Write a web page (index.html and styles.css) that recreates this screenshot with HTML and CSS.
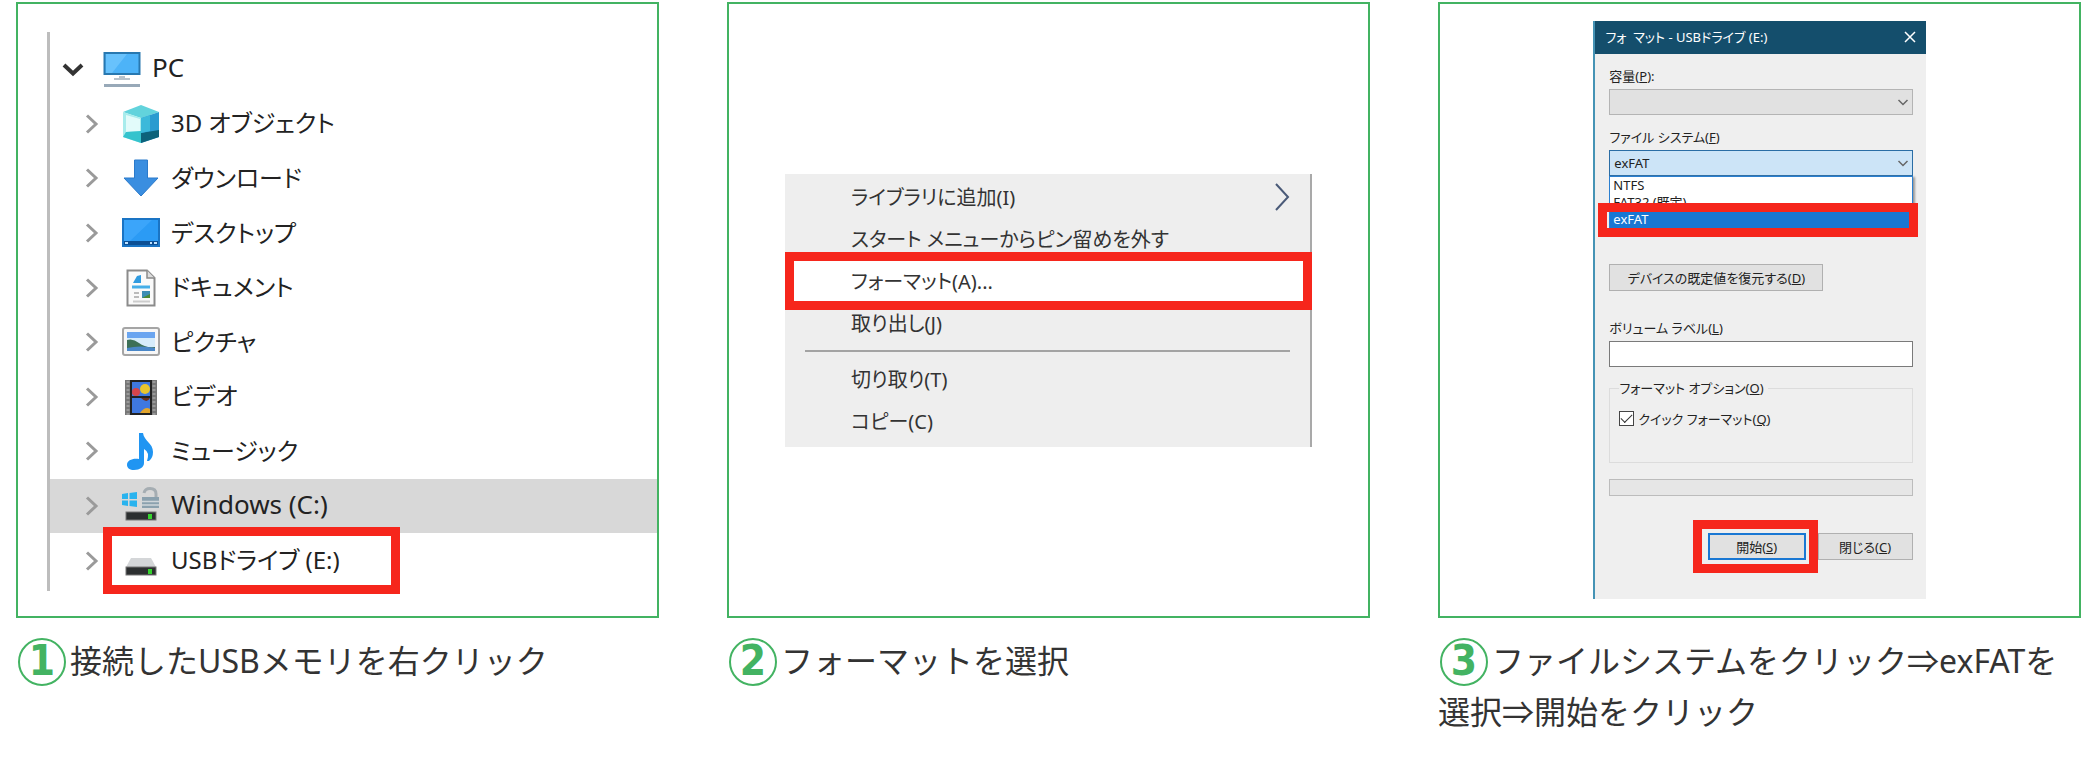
FILE: index.html
```html
<!DOCTYPE html>
<html lang="ja">
<head>
    <meta charset="UTF-8">
    <meta name="viewport" content="width=device-width, initial-scale=1.0">
    <title>USBメモリのフォーマット手順</title>
    <link rel="stylesheet" href="styles.css">
</head>
<body>
    <!-- shared chevrons -->
    <svg class="sprite" aria-hidden="true">
        <symbol id="chevron" viewBox="0 0 24 24">
            <path d="M7 3.500 L16 12 L7 20.500" fill="none" stroke="currentColor" stroke-width="3"/>
        </symbol>
        <symbol id="arrow-down" viewBox="0 0 12 12">
            <path d="M1.500 4 L6 8.500 L10.500 4" fill="none" stroke="currentColor" stroke-width="1.500"/>
        </symbol>
    </svg>

    <div class="steps">
        <section class="step">
            <div class="step-image">
                <ul class="tree">
                    <li class="tree-item tree-root">
                        <svg class="chevron" viewBox="0 0 24 24"><path d="M3 8 L12 16.500 L21 8" fill="none" stroke="#333" stroke-width="4"/></svg>
                        <svg class="tree-icon" viewBox="0 0 38 38">
                            <rect x="1.500" y="3" width="35" height="21" fill="#4db3f8" stroke="#2878b0" stroke-width="2"/>
                            <path d="M3 4 H24 L9 23 H3 Z" fill="#7ccbff" opacity=".6"/>
                            <path d="M16 26 h6 v2 h5 v2 h-16 v-2 h5 z" fill="#b9c3cc"/>
                            <rect x="1" y="34" width="36" height="3" fill="#98a9b8"/>
                        </svg>
                        <span>PC</span>
                    </li>
                    <li class="tree-item">
                        <svg class="chevron"><use href="#chevron"/></svg>
                        <svg class="tree-icon" viewBox="0 0 38 38">
                            <path d="M19 0 L37 7 L19 13 L1 7 Z" fill="#62d3dc"/>
                            <path d="M1 7 L19 13 V38 L1 32 Z" fill="#a8ecec"/>
                            <path d="M4 10 L18 14 V26 L4 27 Z" fill="#e2fbfa"/>
                            <path d="M1 32 L4 27 L19 26 V38 Z" fill="#35c3cd"/>
                            <path d="M19 13 L37 7 V32 L19 38 Z" fill="#2b9bd0"/>
                            <path d="M19 38 V28 L37 25 V32 Z" fill="#0d627a"/>
                            <path d="M19 13 L28 10 V26 L19 28 Z" fill="#3cb9da"/>
                        </svg>
                        <span>3D オブジェクト</span>
                    </li>
                    <li class="tree-item">
                        <svg class="chevron"><use href="#chevron"/></svg>
                        <svg class="tree-icon" viewBox="0 0 38 38">
                            <path d="M12.500 1 H25.500 V19 H36 L19 37 L2 19 H12.500 Z" fill="#3a8ee0" stroke="#2b7acb"/>
                        </svg>
                        <span>ダウンロード</span>
                    </li>
                    <li class="tree-item">
                        <svg class="chevron"><use href="#chevron"/></svg>
                        <svg class="tree-icon" viewBox="0 0 38 38">
                            <rect x="1" y="5" width="36" height="27" fill="#2b9bf5" stroke="#1a74c4" stroke-width="2"/>
                            <path d="M2 6 H30 L8 27 H2 Z" fill="#4cb0ff" opacity=".5"/>
                            <rect x="2" y="27" width="34" height="4" fill="#0c4f94"/>
                            <path d="M3 29 h3 M28 29 h2 M32 29 h3" stroke="#bfe2ff" stroke-width="2"/>
                        </svg>
                        <span>デスクトップ</span>
                    </li>
                    <li class="tree-item">
                        <svg class="chevron"><use href="#chevron"/></svg>
                        <svg class="tree-icon" viewBox="0 0 38 38">
                            <path d="M5.500 1.500 H25 L32.500 9 V36.500 H5.500 Z" fill="#fafafa" stroke="#8b8b8b" stroke-width="2"/>
                            <path d="M25 1.500 V9 H32.500" fill="#ddd" stroke="#8b8b8b" stroke-width="1.500"/>
                            <path d="M11 14 L15 7 L19 6 V14 Z" fill="#2f9be0"/>
                            <path d="M10 18 H28" stroke="#45aee8" stroke-width="3"/>
                            <path d="M12 24 h5 M12 28 h5" stroke="#bbb" stroke-width="2"/>
                            <rect x="20" y="22" width="8" height="7" fill="#3d8fb5"/>
                            <path d="M20 29 L28 25 V29 Z" fill="#4d8b34"/>
                            <path d="M11 32.500 H28" stroke="#ccc" stroke-width="2"/>
                        </svg>
                        <span>ドキュメント</span>
                    </li>
                    <li class="tree-item">
                        <svg class="chevron"><use href="#chevron"/></svg>
                        <svg class="tree-icon" viewBox="0 0 38 38">
                            <rect x="1" y="5" width="36" height="27" rx="2" fill="#f7f7f7" stroke="#a5a5a5" stroke-width="2"/>
                            <rect x="5" y="9" width="28" height="19" fill="#d6ecfb"/>
                            <rect x="5" y="9" width="28" height="6" fill="#6aa5f0"/>
                            <path d="M5 17 Q11 15 17 20 T33 24 V25 H5 Z" fill="#3d7057"/>
                            <path d="M5 25 Q18 22 33 25 V28 H5 Z" fill="#4a87c8"/>
                        </svg>
                        <span>ピクチャ</span>
                    </li>
                    <li class="tree-item">
                        <svg class="chevron"><use href="#chevron"/></svg>
                        <svg class="tree-icon" viewBox="0 0 38 38">
                            <rect x="3" y="2" width="32" height="35" fill="#777"/>
                            <path d="M6 3 V37 M32 3 V37" stroke="#999" stroke-width="3" stroke-dasharray="2 2"/>
                            <rect x="8" y="2" width="22" height="35" fill="#222"/>
                            <rect x="10" y="4" width="18" height="14" fill="#3f78e0"/>
                            <rect x="10" y="20" width="18" height="15" fill="#3f78e0"/>
                            <circle cx="23" cy="11" r="5" fill="#e8c42e"/>
                            <circle cx="14" cy="14" r="4" fill="#d6454b"/>
                            <path d="M19 20 h9 q-3 6 -9 0z" fill="#6b2e1c"/>
                            <path d="M18 35 q5 -7 10 -4 v4z" fill="#e2a52d"/>
                        </svg>
                        <span>ビデオ</span>
                    </li>
                    <li class="tree-item">
                        <svg class="chevron"><use href="#chevron"/></svg>
                        <svg class="tree-icon" viewBox="0 0 38 38">
                            <path d="M17 1 H21 C22 9 31 11 31 20 Q31 26 27 29 H25 Q28 20 22 17 V31 C22 35 18 38 12 38 C8 38 5 36 5 33 C5 28 11 26 17 27 Z" fill="#2095f2"/>
                        </svg>
                        <span>ミュージック</span>
                    </li>
                    <li class="tree-item selected">
                        <svg class="chevron"><use href="#chevron"/></svg>
                        <svg class="tree-icon" viewBox="0 0 38 38">
                            <path d="M0 7 L6 6 V12 H0 Z M7.500 6 L15 5 V12 H7.500 Z M0 13.500 H6 V19 L0 18 Z M7.500 13.500 H15 V20 L7.500 19 Z" fill="#29b3ee"/>
                            <path d="M22 6 Q23 1.500 28 1.500 Q34 1.500 34 7 V11" fill="none" stroke="#a5adb2" stroke-width="3"/>
                            <path d="M20 10 H37 V21 H20 Z" fill="#8ba1ae"/>
                            <path d="M20 14.500 H37 M20 18 H37" stroke="#cfd6da" stroke-width="1.500"/>
                            <rect x="4" y="25" width="30" height="8" fill="#2c2f30" stroke="#777"/>
                            <rect x="26" y="27" width="4" height="5" fill="#36d32e"/>
                        </svg>
                        <span>Windows (C:)</span>
                    </li>
                    <li class="tree-item marked">
                        <svg class="chevron"><use href="#chevron"/></svg>
                        <svg class="tree-icon" viewBox="0 0 38 38">
                            <path d="M9 16 H29 L34 25 H4 Z" fill="#d4d6d8"/>
                            <rect x="4" y="25" width="30" height="8" fill="#2c2f30" stroke="#777"/>
                            <rect x="26" y="27" width="4" height="5" fill="#36d32e"/>
                        </svg>
                        <span>USBドライブ (E:)</span>
                    </li>
                </ul>
            </div>
            <p class="caption"><span class="number">1</span>接続したUSBメモリを右クリック</p>
        </section>

        <section class="step">
            <div class="step-image center">
                <ul class="context-menu">
                    <li class="menu-item">ライブラリに追加(I)
                        <svg class="submenu-arrow" viewBox="0 0 16 28"><path d="M2 1 L14 14 L2 27" fill="none" stroke="#4a5a78" stroke-width="2"/></svg>
                    </li>
                    <li class="menu-item">スタート メニューからピン留めを外す</li>
                    <li class="menu-item marked">フォーマット(A)...</li>
                    <li class="menu-item">取り出し(J)</li>
                    <li class="separator"></li>
                    <li class="menu-item">切り取り(T)</li>
                    <li class="menu-item">コピー(C)</li>
                </ul>
            </div>
            <p class="caption"><span class="number">2</span>フォーマットを選択</p>
        </section>

        <section class="step">
            <div class="step-image center">
                <form class="dialog">
                    <div class="title-bar">
                        <span>フォ  マット - USBドライブ (E:)</span>
                        <button type="button" class="close" aria-label="閉じる">
                            <svg viewBox="0 0 12 12"><path d="M1 1 L11 11 M11 1 L1 11" stroke="#fff" stroke-width="1.500"/></svg>
                        </button>
                    </div>
                    <div class="dialog-body">
                        <div class="field">
                            <label for="capacity">容量(<u>P</u>):</label>
                            <div class="select-box">
                                <select id="capacity"><option></option></select>
                                <svg class="select-arrow"><use href="#arrow-down"/></svg>
                            </div>
                        </div>
                        <div class="field">
                            <label for="filesystem">ファイル システム(<u>F</u>)</label>
                            <div class="select-box open">
                                <select id="filesystem"><option>exFAT</option></select>
                                <svg class="select-arrow"><use href="#arrow-down"/></svg>
                                <ul class="options">
                                    <li>NTFS</li>
                                    <li>FAT32 (既定)</li>
                                    <li class="current">exFAT</li>
                                </ul>
                            </div>
                        </div>
                        <button type="button" class="btn restore">デバイスの既定値を復元する(<u>D</u>)</button>
                        <div class="field">
                            <label for="volume">ボリューム ラベル(<u>L</u>)</label>
                            <input type="text" id="volume">
                        </div>
                        <fieldset>
                            <legend>フォーマット オプション(<u>O</u>)</legend>
                            <input type="checkbox" id="quick" checked>
                            <label for="quick">クイック フォーマット(<u>Q</u>)</label>
                        </fieldset>
                        <div class="progress"></div>
                        <div class="buttons">
                            <div class="start-box">
                                <button type="button" class="btn start">開始(<u>S</u>)</button>
                            </div>
                            <button type="button" class="btn">閉じる(<u>C</u>)</button>
                        </div>
                    </div>
                </form>
            </div>
            <p class="caption"><span class="number">3</span>ファイルシステムをクリック⇒exFATを選択⇒開始をクリック</p>
        </section>
    </div>
</body>
</html>
```

FILE: styles.css
```css
*,
*::before,
*::after {
    box-sizing: border-box;
}

body {
    margin: 0;
    background: #fff;
    color: #333;
    font-family: "Noto Sans", "Noto Sans CJK JP", sans-serif;
}

ul {
    margin: 0;
    padding: 0;
    list-style: none;
}

.sprite {
    display: none;
}

.steps {
    display: grid;
    grid-template-columns: repeat(3, minmax(0, 1fr));
    gap: 68px;
    padding: 2px 18px 0 16px;
}

.step-image {
    display: flex;
    min-height: 616px;
    border: 2px solid #43b362;
    font-feature-settings: "palt";
}

.step-image.center {
    align-items: center;
    justify-content: center;
}

.caption {
    margin: 17px 0 0;
    font-size: 32px;
    line-height: 51px;
}

.number {
    display: inline-flex;
    align-items: center;
    justify-content: center;
    width: 48px;
    height: 48px;
    margin: -6px 4px -2px 2px;
    padding-bottom: 2px;
    border: 2px solid #43b362;
    border-radius: 50%;
    color: #43b362;
    font-family: "DejaVu Sans Condensed", "DejaVu Sans", sans-serif;
    font-size: 42px;
    font-weight: bold;
    line-height: 40px;
    vertical-align: middle;
}

/* Step 1: explorer tree */
.tree {
    flex: 1;
    display: grid;
    grid-auto-rows: 1fr;
    margin: 28px 0 25px 29px;
    padding: 10px 0 3px;
    border-left: 3px solid #bdbdbd;
    color: #222;
    font-size: 24px;
}

.tree-item {
    position: relative;
    display: flex;
    align-items: center;
    padding-left: 30px;
}

.tree-item span {
    padding-bottom: 4px;
}

.tree-root {
    padding-left: 11px;
}

.tree-item.selected {
    background: #d8d8d8;
}

.tree-root,
.tree-item.selected {
    font-size: 26px;
}

.tree-item .chevron {
    width: 24px;
    height: 24px;
    color: #9a9a9a;
}

.tree-icon {
    width: 38px;
    height: 38px;
    margin: 0 11px 0 18px;
}

.tree-item.marked::after {
    content: "";
    position: absolute;
    top: -6px;
    bottom: -6px;
    left: 53px;
    width: 297px;
    border: 9px solid #f6261c;
}

/* Step 2: context menu */
.context-menu {
    width: 100%;
    max-width: 527px;
    padding: 2px 0 5px;
    background: #eee;
    border-right: 2px solid #a9a9a9;
    color: #333;
    font-size: 20px;
}

.menu-item {
    position: relative;
    display: flex;
    align-items: center;
    justify-content: space-between;
    height: 42px;
    padding: 0 20px 0 66px;
}

.submenu-arrow {
    width: 16px;
    height: 28px;
}

.menu-item.marked {
    z-index: 1;
    height: 58px;
    margin: -8px -2px -8px 0;
    padding-left: 57px;
    background: #fff;
    border: 9px solid #f6261c;
}

.separator {
    height: 2px;
    margin: 6px 20px;
    background: #a3a3a3;
}

/* Step 3: format dialog */
.dialog {
    width: 52%;
    background: #efefef;
    border-left: 2px solid #4593b5;
    color: #222;
    font-size: 13px;
}

.dialog button,
.dialog input,
.dialog select {
    margin: 0;
    color: inherit;
    font: inherit;
    font-feature-settings: inherit;
}

.title-bar {
    display: flex;
    align-items: center;
    justify-content: space-between;
    height: 33px;
    padding: 0 10px 2px;
    background: #144e6c;
    color: #fff;
    white-space: pre;
}

.close {
    display: flex;
    padding: 0;
    background: none;
    border: none;
}

.close svg {
    width: 12px;
    height: 12px;
}

.dialog-body {
    padding: 12px 13px 38px 14px;
}

.field {
    display: flex;
    flex-direction: column;
    gap: 3px;
    margin-bottom: 12px;
    line-height: 20px;
}

.select-box {
    position: relative;
    display: flex;
}

.select-box select {
    flex: 1;
    height: 26px;
    padding: 0 4px;
    appearance: none;
    background: #e1e1e1;
    border: 1px solid #b4b4b4;
    border-radius: 0;
}

.select-box.open select {
    background: #cce4f7;
    border-color: #2a6da5;
}

.select-arrow {
    position: absolute;
    top: 7px;
    right: 4px;
    width: 12px;
    height: 12px;
    color: #666;
}

.options {
    position: absolute;
    top: 26px;
    left: 0;
    right: 0;
    height: 60px;
    background: #fff;
    border: 1px solid #2a7fd0;
    box-shadow: 3px 0 2px -1px #999;
    line-height: 17px;
}

.options li {
    padding-left: 3px;
}

.options .current {
    background: #1977d3;
    color: #fff;
}

.options::after {
    content: "";
    position: absolute;
    top: 26px;
    left: -12px;
    right: -6px;
    height: 34px;
    border: 9px solid #f6261c;
}

.btn {
    height: 27px;
    padding: 0;
    background: #e1e1e1;
    border: 1px solid #b0b0b0;
}

.restore {
    display: block;
    width: 214px;
}

.dialog .restore {
    margin: 88px 0 27px;
}

.field input {
    height: 26px;
    padding: 0 4px;
    background: #fff;
    border: 1px solid #7a7a7a;
}

fieldset {
    display: flex;
    align-items: center;
    height: 84px;
    margin: 11px 0 16px;
    padding: 0 9px 22px;
    border: 1px solid #dcdcdc;
}

legend {
    padding: 0 4px 0 0;
    line-height: 18px;
}

fieldset input {
    display: grid;
    place-items: center;
    width: 15px;
    height: 15px;
    appearance: none;
    background: #fff;
    border: 1px solid #444;
}

fieldset input:checked::before {
    content: "";
    width: 11px;
    height: 6px;
    margin-bottom: 3px;
    border: solid #333;
    border-width: 0 0 1px 1px;
    transform: rotate(-45deg);
}

fieldset label {
    margin-left: 4px;
}

.progress {
    height: 17px;
    background: #e6e6e6;
    border: 1px solid #bcbcbc;
}

.buttons {
    display: flex;
    justify-content: flex-end;
    align-items: center;
    margin-top: 36px;
}

.buttons .btn {
    width: 95px;
}

.start-box {
    margin: -12px 0;
    padding: 4px 3px 4px 6px;
    border: 9px solid #f6261c;
}

.buttons .start {
    display: block;
    width: 98px;
    border: 2px solid #1977d3;
}
```
